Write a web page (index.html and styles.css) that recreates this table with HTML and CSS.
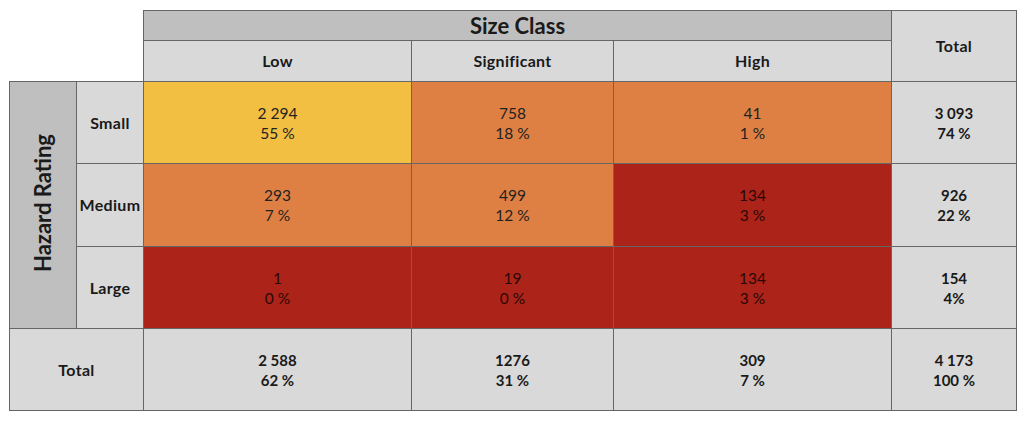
FILE: index.html
```html
<!DOCTYPE html>
<html>
<head>
<meta charset="utf-8">
<link rel="stylesheet" href="styles.css">
</head>
<body>
<table class="matrix">
  <colgroup>
    <col class="c-axis">
    <col class="c-label">
    <col class="c-low">
    <col class="c-sig">
    <col class="c-high">
    <col class="c-total">
  </colgroup>
  <tr class="r-top">
    <td class="blank" colspan="2" rowspan="2"></td>
    <th class="group" colspan="3">Size Class</th>
    <th class="head" rowspan="2">Total</th>
  </tr>
  <tr class="r-sub">
    <th class="head">Low</th>
    <th class="head">Significant</th>
    <th class="head">High</th>
  </tr>
  <tr class="r-data">
    <th class="axis" rowspan="3"><span class="vert">Hazard Rating</span></th>
    <th class="head">Small</th>
    <td class="cell yellow">2 294<br>55 %</td>
    <td class="cell orange">758<br>18 %</td>
    <td class="cell orange">41<br>1 %</td>
    <td class="head sum">3 093<br>74 %</td>
  </tr>
  <tr class="r-data2">
    <th class="head">Medium</th>
    <td class="cell orange">293<br>7 %</td>
    <td class="cell orange">499<br>12 %</td>
    <td class="cell red">134<br>3 %</td>
    <td class="head sum">926<br>22 %</td>
  </tr>
  <tr class="r-data">
    <th class="head">Large</th>
    <td class="cell red">1<br>0 %</td>
    <td class="cell red">19<br>0 %</td>
    <td class="cell red">134<br>3 %</td>
    <td class="head sum">154<br>4%</td>
  </tr>
  <tr class="r-data">
    <th class="head" colspan="2">Total</th>
    <td class="head sum">2 588<br>62 %</td>
    <td class="head sum">1276<br>31 %</td>
    <td class="head sum">309<br>7 %</td>
    <td class="head sum">4 173<br>100 %</td>
  </tr>
</table>
</body>
</html>
```

FILE: styles.css
```css
html, body {
  margin: 0;
  padding: 0;
  background: #ffffff;
}

body {
  padding: 10px 0 0 9px;
  font-family: Lato, "Noto Sans", "Liberation Sans", sans-serif;
  color: #1a1a1a;
}

.matrix {
  border-collapse: collapse;
  table-layout: fixed;
  width: 1007px;
}

.c-axis { width: 67px; }
.c-label { width: 67px; }
.c-low { width: 268px; }
.c-sig { width: 202px; }
.c-high { width: 278px; }
.c-total { width: 125px; }

.r-top { height: 30px; }
.r-sub { height: 41px; }
.r-data { height: 82px; }
.r-data2 { height: 83px; }

.matrix th,
.matrix td {
  border: 1px solid #666666;
  padding: 0;
  text-align: center;
  vertical-align: middle;
  line-height: 20px;
}

.matrix td.blank {
  border: none;
  background: #ffffff;
}

.group {
  background: #bfbfbf;
  font-size: 22px;
  font-weight: 700;
  line-height: 26px;
}

.head {
  background: #d9d9d9;
  font-size: 16px;
  font-weight: 700;
  letter-spacing: 0.3px;
}

.sum {
  font-size: 15px;
  letter-spacing: 0;
}

.axis {
  background: #bfbfbf;
}

.vert {
  display: inline-block;
  writing-mode: vertical-rl;
  transform: rotate(180deg);
  font-size: 22px;
  font-weight: 700;
  line-height: 26px;
}

.cell {
  font-size: 15.5px;
  font-weight: 400;
  color: #222222;
}

.yellow { background: #f2bf42; }
.orange { background: #de8043; }
.red { background: #ac231a; color: #2a0805; }
```
